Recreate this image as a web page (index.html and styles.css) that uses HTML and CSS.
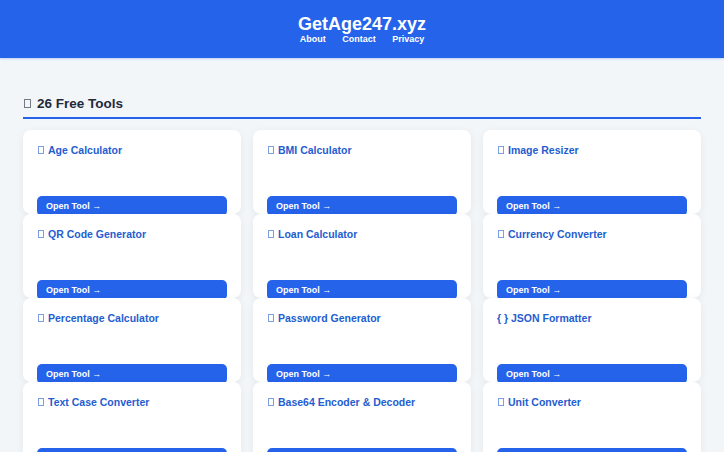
FILE: index.html
```html
<!DOCTYPE html>
<html lang="en">
<head>
    <meta charset="UTF-8">
    <meta name="viewport" content="width=device-width, initial-scale=1.0">
    <title>GetAge247.xyz - Free Online Tools</title>
    <link rel="stylesheet" href="styles.css">
</head>
<body>
    <header class="site-header">
        <h1>GetAge247.xyz</h1>
        <nav class="site-nav">
            <a href="#">About</a>
            <a href="#">Contact</a>
            <a href="#">Privacy</a>
        </nav>
    </header>

    <main class="container">
        <h2 class="section-title"><span class="ico"></span>26 Free Tools</h2>

        <div class="tools-grid">
            <div class="tool-card">
                <h3><span class="ico"></span>Age Calculator</h3>
                <p class="desc"></p>
                <a class="open-btn" href="#">Open Tool →</a>
            </div>
            <div class="tool-card">
                <h3><span class="ico"></span>BMI Calculator</h3>
                <p class="desc"></p>
                <a class="open-btn" href="#">Open Tool →</a>
            </div>
            <div class="tool-card">
                <h3><span class="ico"></span>Image Resizer</h3>
                <p class="desc"></p>
                <a class="open-btn" href="#">Open Tool →</a>
            </div>
            <div class="tool-card">
                <h3><span class="ico"></span>QR Code Generator</h3>
                <p class="desc"></p>
                <a class="open-btn" href="#">Open Tool →</a>
            </div>
            <div class="tool-card">
                <h3><span class="ico"></span>Loan Calculator</h3>
                <p class="desc"></p>
                <a class="open-btn" href="#">Open Tool →</a>
            </div>
            <div class="tool-card">
                <h3><span class="ico"></span>Currency Converter</h3>
                <p class="desc"></p>
                <a class="open-btn" href="#">Open Tool →</a>
            </div>
            <div class="tool-card">
                <h3><span class="ico"></span>Percentage Calculator</h3>
                <p class="desc"></p>
                <a class="open-btn" href="#">Open Tool →</a>
            </div>
            <div class="tool-card">
                <h3><span class="ico"></span>Password Generator</h3>
                <p class="desc"></p>
                <a class="open-btn" href="#">Open Tool →</a>
            </div>
            <div class="tool-card">
                <h3>{ } JSON Formatter</h3>
                <p class="desc"></p>
                <a class="open-btn" href="#">Open Tool →</a>
            </div>
            <div class="tool-card">
                <h3><span class="ico"></span>Text Case Converter</h3>
                <p class="desc"></p>
                <a class="open-btn" href="#">Open Tool →</a>
            </div>
            <div class="tool-card">
                <h3><span class="ico"></span>Base64 Encoder &amp; Decoder</h3>
                <p class="desc"></p>
                <a class="open-btn" href="#">Open Tool →</a>
            </div>
            <div class="tool-card">
                <h3><span class="ico"></span>Unit Converter</h3>
                <p class="desc"></p>
                <a class="open-btn" href="#">Open Tool →</a>
            </div>
        </div>
    </main>
</body>
</html>
```

FILE: styles.css
```css
body {
    font-family: 'Liberation Sans', Arial, sans-serif;
    margin: 0;
    background-color: #f3f6f9;
    color: #1e293b;
}

.site-header {
    background-color: #2563eb;
    color: white;
    text-align: center;
    padding: 15px 0 13px;
    box-shadow: 0 1px 2px rgba(37, 99, 235, 0.25);
}

.site-header h1 {
    margin: 0;
    font-size: 18px;
    line-height: 18px;
}

.site-nav {
    margin-top: 1px;
    font-size: 9px;
    line-height: 11px;
    font-weight: bold;
}

.site-nav a {
    color: white;
    text-decoration: none;
    margin: 0 7px;
}

.container {
    padding: 0 23px;
}

.section-title {
    margin: 38px 0 11px;
    font-size: 13.5px;
    line-height: 16px;
    padding-bottom: 5px;
    border-bottom: 2px solid #2563eb;
    color: #1e293b;
}

/* placeholder box for the emoji that the font can't draw */
.ico {
    display: inline-block;
    box-sizing: border-box;
    width: 6px;
    height: 8px;
    border: 1px solid currentColor;
    opacity: 0.6;
    margin-right: 4px;
}

.section-title .ico {
    width: 7px;
    height: 9px;
    margin-right: 6px;
    margin-left: 1px;
}

.tools-grid {
    display: grid;
    grid-template-columns: repeat(3, 1fr);
    grid-auto-rows: 84px;
    column-gap: 12px;
}

.tool-card {
    background: white;
    border-radius: 8px;
    box-shadow: 0 2px 8px rgba(15, 23, 42, 0.06);
    padding: 13px 14px 14px;
}

.tool-card h3 {
    margin: 0;
    font-size: 10.5px;
    line-height: 14px;
    color: #245dd0;
}

.tool-card h3 .ico {
    margin-left: 1px;
}

.tool-card .desc {
    margin: 0;
    height: 39px;
}

.open-btn {
    display: block;
    background-color: #2563eb;
    color: white;
    text-decoration: none;
    font-size: 9px;
    font-weight: bold;
    line-height: 11px;
    padding: 4.5px 9px;
    border-radius: 5px;
}
```
